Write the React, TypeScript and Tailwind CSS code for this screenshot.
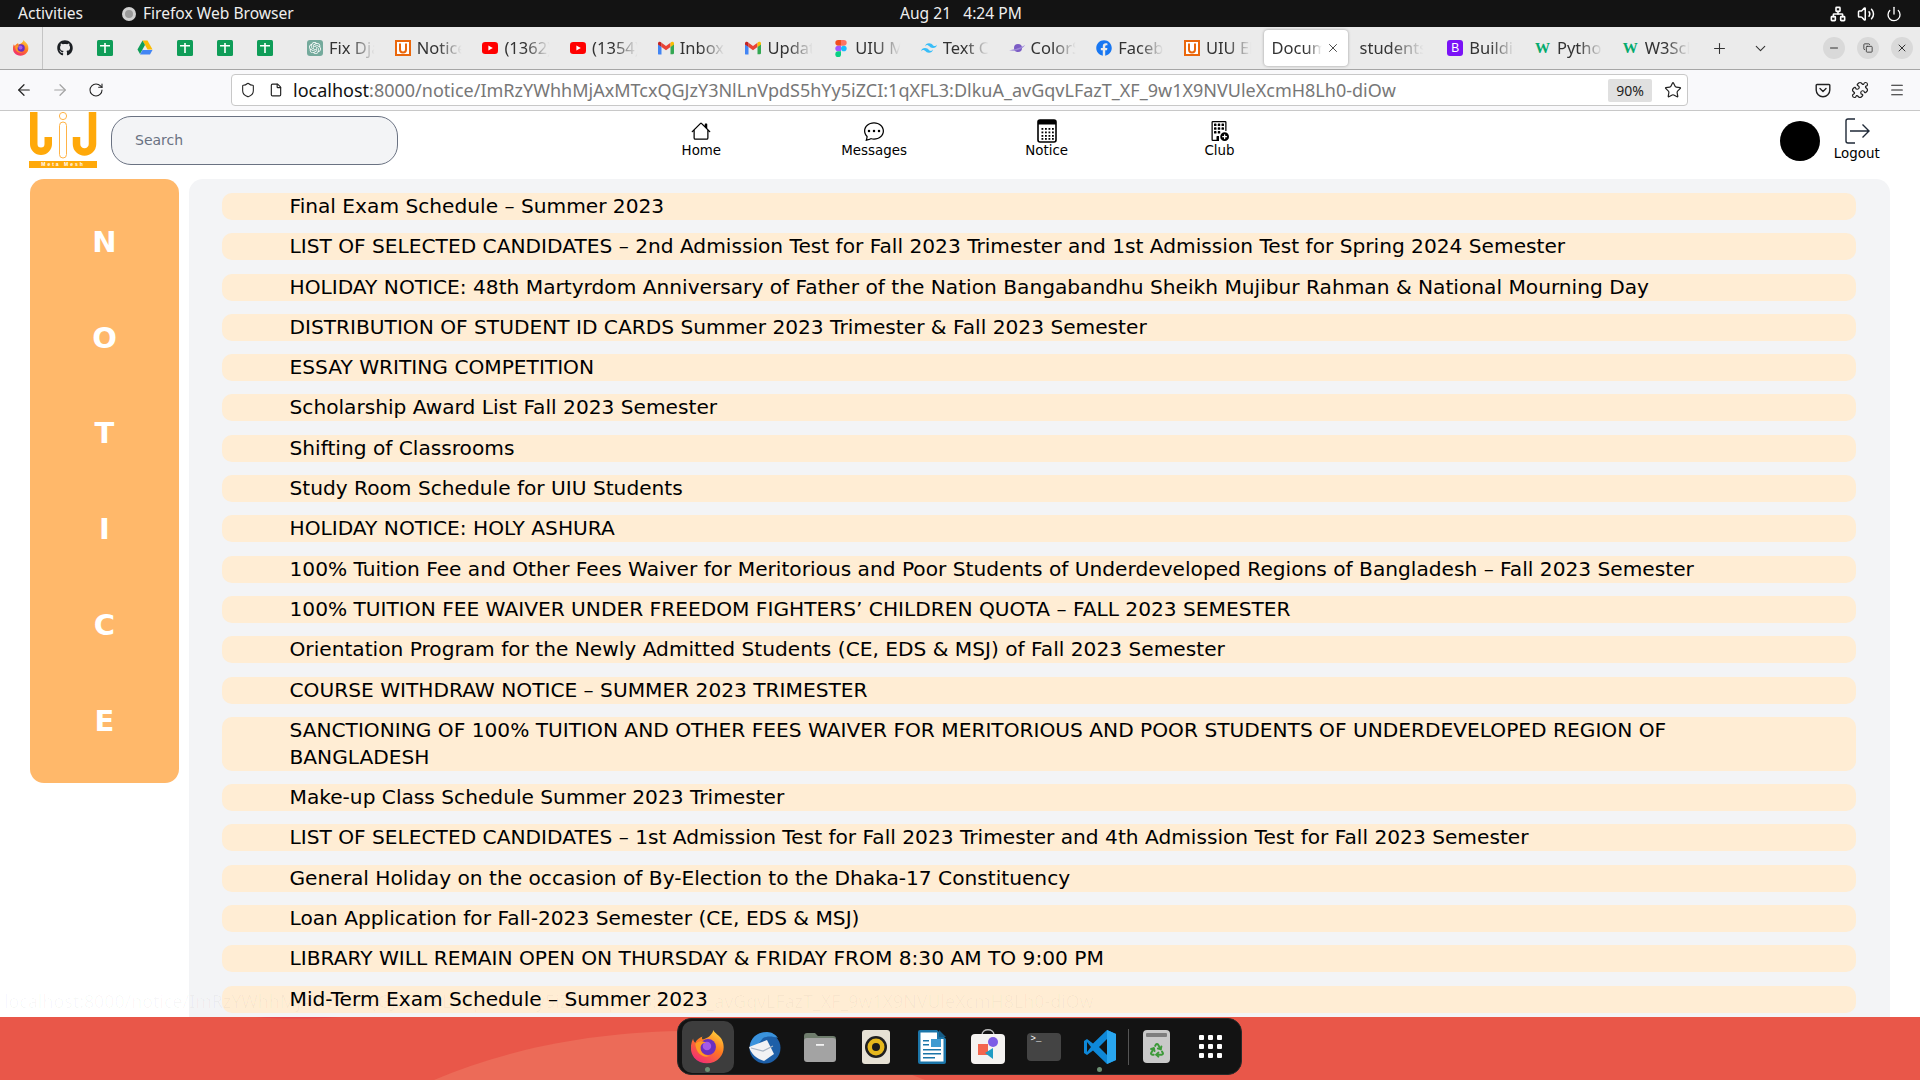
import React, { ReactNode } from "react";
import {
  ArrowLeft,
  ArrowRight,
  ChevronDown,
  Copy,
  File,
  Menu,
  Minus,
  Network,
  Plus,
  Power,
  Puzzle,
  Recycle,
  RotateCw,
  Shield,
  Star,
  Volume2,
  X,
} from "lucide-react";
import { FaFacebook, FaGithub } from "react-icons/fa";
import { SiOpenai, SiTailwindcss } from "react-icons/si";
import { BsBuildingAdd, BsChatDots, BsHouse } from "react-icons/bs";

const notices = [
  "Final Exam Schedule – Summer 2023",
  "LIST OF SELECTED CANDIDATES – 2nd Admission Test for Fall 2023 Trimester and 1st Admission Test for Spring 2024 Semester",
  "HOLIDAY NOTICE: 48th Martyrdom Anniversary of Father of the Nation Bangabandhu Sheikh Mujibur Rahman & National Mourning Day",
  "DISTRIBUTION OF STUDENT ID CARDS Summer 2023 Trimester & Fall 2023 Semester",
  "ESSAY WRITING COMPETITION",
  "Scholarship Award List Fall 2023 Semester",
  "Shifting of Classrooms",
  "Study Room Schedule for UIU Students",
  "HOLIDAY NOTICE: HOLY ASHURA",
  "100% Tuition Fee and Other Fees Waiver for Meritorious and Poor Students of Underdeveloped Regions of Bangladesh – Fall 2023 Semester",
  "100% TUITION FEE WAIVER UNDER FREEDOM FIGHTERS’ CHILDREN QUOTA – FALL 2023 SEMESTER",
  "Orientation Program for the Newly Admitted Students (CE, EDS & MSJ) of Fall 2023 Semester",
  "COURSE WITHDRAW NOTICE – SUMMER 2023 TRIMESTER",
  "SANCTIONING OF 100% TUITION AND OTHER FEES WAIVER FOR MERITORIOUS AND POOR STUDENTS OF UNDERDEVELOPED REGION OF BANGLADESH",
  "Make-up Class Schedule Summer 2023 Trimester",
  "LIST OF SELECTED CANDIDATES – 1st Admission Test for Fall 2023 Trimester and 4th Admission Test for Fall 2023 Semester",
  "General Holiday on the occasion of By-Election to the Dhaka-17 Constituency",
  "Loan Application for Fall-2023 Semester (CE, EDS & MSJ)",
  "LIBRARY WILL REMAIN OPEN ON THURSDAY & FRIDAY FROM 8:30 AM TO 9:00 PM",
  "Mid-Term Exam Schedule – Summer 2023",
];

const urlPath =
  ":8000/notice/ImRzYWhhMjAxMTcxQGJzY3NlLnVpdS5hYy5iZCI:1qXFL3:DlkuA_avGqvLFazT_XF_9w1X9NVUleXcmH8Lh0-diOw";

const Sheets = () => (
  <svg viewBox="0 0 16 16" className="w-4 h-4">
    <rect width="16" height="16" rx="1.5" fill="#0f9d58" />
    <path d="M3 5h10v1.6H3zM7.2 3h1.6v10H7.2z" fill="#fff" />
  </svg>
);

const Drive = () => (
  <svg viewBox="0 0 16 15" className="w-4 h-4">
    <path d="M5.5 0h5l5 9h-5z" fill="#fbbc04" />
    <path d="M5.5 0L0.5 9l2.5 4.5L8 4.5z" fill="#0f9d58" />
    <path d="M5.5 9.5h10L13 14H3z" fill="#4285f4" />
  </svg>
);

const Uiu = () => (
  <svg viewBox="0 0 16 16" className="w-4 h-4">
    <rect x="1" y="1" width="14" height="14" fill="#fff" stroke="#ea670c" strokeWidth="2" />
    <path d="M5 3.5v6a3 3 0 006 0v-6" fill="none" stroke="#ea670c" strokeWidth="2" />
  </svg>
);

const Youtube = () => (
  <svg viewBox="0 0 16 16" className="w-4 h-4">
    <rect y="2" width="16" height="12" rx="3.2" fill="#f00" />
    <path d="M6.4 5.4L10.8 8l-4.4 2.6z" fill="#fff" />
  </svg>
);

const Gmail = () => (
  <svg viewBox="0 0 16 13" className="w-4 h-4">
    <path d="M0 2v9.5A1.2 1.2 0 001.2 13H3.5V5.5z" fill="#4285f4" />
    <path d="M16 2v9.5a1.2 1.2 0 01-1.2 1.2H12.5V5.5z" fill="#34a853" />
    <path d="M3.5 5.5L8 8.8l4.5-3.3V1.2L8 4.5 3.5 1.2z" fill="#ea4335" />
    <path d="M0 2c0-1.6 2-2.3 3.5-.8v4.3L0 3z" fill="#c5221f" />
    <path d="M16 2c0-1.6-2-2.3-3.5-.8v4.3L16 3z" fill="#fbbc04" />
  </svg>
);

const Figma = () => (
  <svg viewBox="0 0 12 18" className="w-4 h-[17px]">
    <path d="M6 0H3a3 3 0 000 6h3z" fill="#f24e1e" />
    <path d="M6 0h3a3 3 0 010 6H6z" fill="#ff7262" />
    <path d="M6 6H3a3 3 0 000 6h3z" fill="#a259ff" />
    <circle cx="9" cy="9" r="3" fill="#1abcfe" />
    <path d="M6 12H3a3 3 0 103 3z" fill="#0acf83" />
  </svg>
);

const ColorSpace = () => (
  <svg viewBox="0 0 16 10" className="w-4 h-[10px]">
    <circle cx="9" cy="5" r="4" fill="#7b5cc4" />
    <path d="M0 7c4 0 11-2 16-5-2 4-10 7-16 5z" fill="#9b86d8" />
  </svg>
);

const BootstrapIcon = () => (
  <span className="flex w-4 h-4 rounded-[3px] bg-[#7a12f6] text-white text-[12px] leading-4 items-center justify-center font-['Liberation_Sans',sans-serif]">
    B
  </span>
);

const W3 = () => (
  <span className="w-4 text-[#04aa6d] text-[15px] leading-4 font-bold font-['Liberation_Serif',serif]">
    W
  </span>
);

const Gpt = () => (
  <span className="flex w-4 h-4 rounded-[3px] bg-[#74aa9c] items-center justify-center">
    <SiOpenai className="w-3 h-3 text-white" />
  </span>
);

const tabs: { icon?: ReactNode; label: string; active?: boolean }[] = [
  { icon: <Gpt />, label: "Fix Django" },
  { icon: <Uiu />, label: "Notice" },
  { icon: <Youtube />, label: "(1362) YouTube" },
  { icon: <Youtube />, label: "(1354) YouTube" },
  { icon: <Gmail />, label: "Inbox (3)" },
  { icon: <Gmail />, label: "Update" },
  { icon: <Figma />, label: "UIU Meta" },
  { icon: <SiTailwindcss className="w-4 h-4 text-[#38bdf8]" />, label: "Text Color" },
  { icon: <ColorSpace />, label: "ColorSpace" },
  { icon: <FaFacebook className="w-4 h-4 text-[#1877f2]" />, label: "Facebook" },
  { icon: <Uiu />, label: "UIU ELMS" },
  { label: "Document", active: true },
  { label: "students" },
  { icon: <BootstrapIcon />, label: "Building" },
  { icon: <W3 />, label: "Python" },
  { icon: <W3 />, label: "W3Schools" },
];

const TopBar = () => (
  <div className="h-[27px] bg-[#131313] flex items-center text-[#eeeeee] text-[15.6px] relative shrink-0">
    <span className="ml-[18px]">Activities</span>
    <span className="ml-[39px] w-[14px] h-[14px] rounded-full bg-[#9a9a9a] border-[3px] border-[#d0d0d0]" />
    <span className="ml-[7px]">Firefox Web Browser</span>
    <span className="absolute left-[900px]">Aug 21&nbsp;&nbsp; 4:24 PM</span>
    <div className="ml-auto flex items-center gap-[11px] pr-[18px]">
      <Network className="w-4 h-4 text-white" strokeWidth={2.4} />
      <Volume2 className="w-[18px] h-[18px] text-white" />
      <Power className="w-4 h-4 text-white" />
    </div>
  </div>
);

const TabStrip = () => (
  <div className="h-[43px] bg-[#ebebeb] border-b border-[#a6a6a6] flex items-center text-[#333333] text-[16.5px] shrink-0">
    <div className="w-[43px] h-full flex items-center justify-center border-r border-[#c4c4c4]">
      <Firefox size={16} />
    </div>
    <div className="flex items-center gap-[24px] pl-[14px] w-[254px]">
      <FaGithub className="w-4 h-4 text-[#1b1f23]" />
      <Sheets />
      <Drive />
      <Sheets />
      <Sheets />
      <Sheets />
    </div>
    {tabs.map((t) =>
      t.active ? (
        <div
          key={t.label}
          className="w-[84px] h-[36px] mx-[2px] px-2 flex items-center justify-between bg-white rounded-[4px] shadow-[0_0_3px_rgba(0,0,0,0.35)] shrink-0"
        >
          <span className="w-[50px] overflow-hidden whitespace-nowrap [mask-image:linear-gradient(to_right,black_70%,transparent)]">
            {t.label}
          </span>
          <X className="w-[14px] h-[14px]" strokeWidth={1.5} />
        </div>
      ) : (
        <div key={t.label} className="w-[87.7px] pl-[10px] pr-[8px] flex items-center gap-[6px] shrink-0">
          {t.icon && <span className="w-4 h-4 flex items-center justify-center shrink-0">{t.icon}</span>}
          <span className="overflow-hidden whitespace-nowrap [mask-image:linear-gradient(to_right,black_45%,transparent_95%)]">
            {t.label}
          </span>
        </div>
      )
    )}
    <Plus className="w-[17px] h-[17px] ml-[11px]" strokeWidth={1.5} />
    <ChevronDown className="w-[17px] h-[17px] ml-[24px]" strokeWidth={1.5} />
    <div className="ml-auto flex gap-3 pr-[7px]">
      <span className="w-[22px] h-[22px] rounded-full bg-[#d9d9d9] flex items-center justify-center">
        <Minus className="w-3 h-3" />
      </span>
      <span className="w-[22px] h-[22px] rounded-full bg-[#d9d9d9] flex items-center justify-center">
        <Copy className="w-[10px] h-[10px]" />
      </span>
      <span className="w-[22px] h-[22px] rounded-full bg-[#d9d9d9] flex items-center justify-center">
        <X className="w-3 h-3" />
      </span>
    </div>
  </div>
);

const Pocket = () => (
  <svg viewBox="0 0 16 16" className="w-4 h-4" fill="none" stroke="currentColor" strokeWidth="1.4">
    <path d="M2 2.5h12a.8.8 0 01.8.8V8a6.8 6.8 0 01-13.6 0V3.3a.8.8 0 01.8-.8z" />
    <path d="M5 6.5l3 3 3-3" strokeLinecap="round" strokeLinejoin="round" />
  </svg>
);

const UrlBar = () => (
  <div className="h-[41px] bg-[#f9f9fb] border-b border-[#c8c8c8] flex items-center shrink-0 text-[#222222]">
    <ArrowLeft className="w-[18px] h-[18px] ml-[15px]" strokeWidth={1.6} />
    <ArrowRight className="w-[18px] h-[18px] ml-[18px] text-[#a3a3a3]" strokeWidth={1.6} />
    <RotateCw className="w-4 h-4 ml-[19px]" strokeWidth={1.6} />
    <div className="ml-[127px] w-[1457px] h-[32px] bg-white border border-[#c8c8c8] rounded-[4px] flex items-center shrink-0">
      <Shield className="w-4 h-4 ml-2" strokeWidth={1.6} />
      <File className="w-[14px] h-[14px] ml-[13px]" strokeWidth={2} />
      <span className="ml-[10px] text-[18px] whitespace-nowrap text-[#777777] w-[1310px] overflow-hidden">
        <span className="text-[#111111]">localhost</span>
        {urlPath}
      </span>
      <span className="ml-[5px] w-[44px] h-[23px] bg-[#e0e0e0] rounded-[2px] text-[14px] flex items-center justify-center shrink-0">
        90%
      </span>
      <Star className="ml-[12px] w-[18px] h-[18px] shrink-0" strokeWidth={1.6} />
    </div>
    <div className="ml-auto flex items-center gap-[20px] pr-[15px]">
      <Pocket />
      <Puzzle className="w-[18px] h-[18px]" strokeWidth={1.6} />
      <Menu className="w-4 h-4" strokeWidth={1.6} />
    </div>
  </div>
);

// the logo on the left of the page header
const MetaMeshLogo = () => (
  <div className="w-[68px] h-[56px] flex flex-col justify-between">
    <svg viewBox="0 0 68 47" className="w-[68px] h-[47px]">
      <path d="M4.75 0v32a7.25 7.25 0 0014.5 0v-7" fill="none" stroke="#ffa90a" strokeWidth="7.5" />
      <path d="M63.5 0v32a8 8 0 01-16 0v-7" fill="none" stroke="#ffa90a" strokeWidth="7.5" />
      <circle cx="34" cy="4" r="3.6" fill="none" stroke="#ffb347" strokeWidth="1" />
      <rect x="30.5" y="10" width="7" height="36" rx="3.5" fill="none" stroke="#ffb347" strokeWidth="1" />
    </svg>
    <div className="h-[7px] bg-[#ffa90a] text-white text-[5px] leading-[7px] tracking-[2px] text-center font-['Liberation_Sans',sans-serif] font-bold whitespace-nowrap overflow-hidden">
      Meta Mesh
    </div>
  </div>
);

const NoticeIcon = () => (
  <svg viewBox="0 0 20 24" className="w-5 h-6">
    <rect x="1" y="1" width="18" height="22" rx="2" fill="none" stroke="#000" strokeWidth="1.6" />
    <rect x="1" y="1" width="18" height="4.5" fill="#000" />
    {[9, 12.5, 16, 19].map((y) =>
      [4.5, 8, 11.5, 15].map((x) => <rect key={`${x}-${y}`} x={x} y={y} width="1.8" height="1.8" fill="#000" />)
    )}
  </svg>
);

const LogoutIcon = () => (
  <svg viewBox="0 0 26 26" className="w-[26px] h-[26px]" fill="none" stroke="#1f2937" strokeWidth="1.4">
    <path d="M11 1H4a2 2 0 00-2 2v20a2 2 0 002 2h7" />
    <path d="M6 13h19M18.5 6.5L25 13l-6.5 6.5" />
  </svg>
);

const navItems = [
  { label: "Home", icon: <BsHouse className="w-5 h-5" /> },
  { label: "Messages", icon: <BsChatDots className="w-5 h-5" /> },
  { label: "Notice", icon: <NoticeIcon /> },
  { label: "Club", icon: <BsBuildingAdd className="w-5 h-6" /> },
];

const PageHeader = () => (
  <div className="h-[68px] flex shrink-0 items-start font-['DejaVu_Sans',sans-serif]">
    <div className="ml-[29px] mt-px">
      <MetaMeshLogo />
    </div>
    <div className="ml-[14px] mt-[5px] w-[287px] h-[49px] bg-gray-100 border border-gray-500 rounded-[20px] flex items-center pl-[23px] text-[14px] text-gray-500 shrink-0">
      Search
    </div>
    <div className="flex ml-[217px] mt-[7px] text-[13.4px] text-black shrink-0">
      {navItems.map((n) => (
        <div key={n.label} className="w-[172.7px] h-[41px] flex flex-col items-center justify-between">
          <span className="h-[26px] flex items-center">{n.icon}</span>
          <span className="leading-4">{n.label}</span>
        </div>
      ))}
    </div>
    <div className="ml-[474px] mt-[10px] w-10 h-10 rounded-full bg-black shrink-0" />
    <div className="ml-[12px] mt-[7px] w-[50px] flex flex-col items-center text-[13.4px] text-black shrink-0">
      <LogoutIcon />
      <span className="leading-4 mt-[2px]">Logout</span>
    </div>
  </div>
);

const Sidebar = () => (
  <div className="w-[149px] bg-orange-300 rounded-[14px] pt-[16px] pb-[14px] flex flex-col self-start text-white text-[29px] font-bold shrink-0">
    {["N", "O", "T", "I", "C", "E"].map((l) => (
      <div key={l} className="h-[95.7px] flex items-center justify-center">
        {l}
      </div>
    ))}
  </div>
);

const NoticePanel = () => (
  <div className="ml-[10px] w-[1701px] bg-gray-100 rounded-t-[14px] pt-[14px] pl-[33px] pr-[34px] flex flex-col gap-[13.3px] overflow-hidden">
    {notices.map((n) => (
      <div key={n} className="bg-orange-100 rounded-[10px] pl-[67.5px] pr-[68px] text-[20.17px] leading-[27px] text-black shrink-0">
        {n}
      </div>
    ))}
  </div>
);

// small app icons for the dock
const Firefox = ({ size }: { size: number }) => (
  <svg viewBox="0 0 32 32" width={size} height={size}>
    <defs>
      <linearGradient id="ffx" x1="0.8" y1="0" x2="0.2" y2="1">
        <stop offset="0" stopColor="#ffd53d" />
        <stop offset="0.45" stopColor="#ff7a1f" />
        <stop offset="1" stopColor="#f0267c" />
      </linearGradient>
    </defs>
    <path d="M21 0c1 3 6 5 8 9 3 6 2 13-2 17-6 7-18 7-24 0C-1 21-1 14 2 8c0 2 1 3 2 4 1-3 4-5 7-6-1 1-1 2 0 3 4-1 9-4 10-9z" fill="url(#ffx)" />
    <circle cx="16" cy="16" r="7.5" fill="#6a2fc0" />
    <circle cx="15" cy="15" r="4" fill="#a55ae8" />
    <path d="M4 13c3-3 7-3 10-1-3 0-5 2-5 5 0 5 5 8 10 7-6 3-14 0-15-11z" fill="#ff9a24" />
  </svg>
);

const Thunderbird = () => (
  <svg viewBox="0 0 34 34" className="w-[34px] h-[34px]">
    <circle cx="18" cy="18" r="15.5" fill="#1d5fa8" />
    <path d="M3 16C4 7 11 2 20 2c5 0 9 3 11 6-6-2-11-2-15 0L5 22z" fill="#3a93dd" />
    <path d="M2 17l18-7 7 14-10 7C10 29 4 24 2 17z" fill="#f2f2f4" />
    <path d="M4 18l12 3 10-5" fill="none" stroke="#a9b5c4" strokeWidth="1.2" />
  </svg>
);

const Files = () => (
  <svg viewBox="0 0 34 32" className="w-[34px] h-8">
    <path d="M1 5a3 3 0 013-3h8l3 3h15a3 3 0 013 3v4H1z" fill="#6f7d6d" />
    <rect x="1" y="7" width="32" height="24" rx="3" fill="#a3a3a3" />
    <rect x="13" y="13" width="8" height="1.8" fill="#f2f2f2" />
  </svg>
);

const Rhythmbox = () => (
  <svg viewBox="0 0 28 34" className="w-[28px] h-[34px]">
    <rect width="28" height="34" rx="3" fill="#e6e1d4" />
    <circle cx="14" cy="17" r="11" fill="#1f1f1f" />
    <circle cx="14" cy="17" r="8.5" fill="#e6b81c" />
    <circle cx="14" cy="17" r="4" fill="#1c1c1c" />
  </svg>
);

const Writer = () => (
  <svg viewBox="0 0 28 34" className="w-[28px] h-[34px]">
    <path d="M2 0h17l9 9v23a2 2 0 01-2 2H2a2 2 0 01-2-2V2a2 2 0 012-2z" fill="#1b75a8" />
    <path d="M2.5 2.5H19v6.5h6.5v22.5h-23z" fill="#fff" />
    <path d="M21 0l7 7h-7z" fill="#175c85" />
    <rect x="13" y="9" width="10" height="8" fill="#3f9bd1" />
    <path d="M5 10h6v1.6H5zM5 14h6v1.6H5zM5 19h18v1.6H5zM5 23h18v1.6H5zM5 27h12v1.6H5z" fill="#1b75a8" />
  </svg>
);

const Store = () => (
  <svg viewBox="0 0 34 36" className="w-[34px] h-9">
    <path d="M11 6c0-7 12-7 12 0" fill="none" stroke="#bdbdbd" strokeWidth="1.4" />
    <rect y="5" width="34" height="30" rx="4" fill="#f5f3f1" />
    <circle cx="22" cy="13" r="5" fill="#7c5ce6" />
    <rect x="7" y="15" width="10" height="11" fill="#f4664e" />
    <path d="M14 24l8-5v11z" fill="#1f9cc4" />
  </svg>
);

const Terminal = () => (
  <div className="w-[34px] h-[28px] bg-[#444444] rounded-[4px] pl-[4px] text-white text-[9px] leading-[12px] font-['Liberation_Mono',monospace]">
    &gt;_
  </div>
);

const VsCode = () => (
  <svg viewBox="0 0 32 34" className="w-8 h-[34px]">
    <path d="M23 0l9 4v26l-9 4-14-13.5L3 25l-3-2v-12l3-2 6 4.5z" fill="#0e88d8" />
    <path d="M23 0l9 4v26l-9 4z" fill="#29a6ef" />
    <path d="M23 9l-8 8 8 8z" fill="#131313" />
    <path d="M3 12l4 5-4 5z" fill="#131313" />
  </svg>
);

const Trash = () => (
  <div className="w-[27px] h-[33px] rounded-[4px] bg-[#c9c9c9] pt-[3px] px-[3px] flex flex-col items-center">
    <span className="w-full h-[4px] rounded-[1px] bg-[#7e7e7e]" />
    <Recycle className="w-4 h-4 mt-[5px] text-[#3d9a39]" strokeWidth={3} />
  </div>
);

const AppGrid = () => (
  <div className="grid grid-cols-3 gap-[4px]">
    {[0, 1, 2, 3, 4, 5, 6, 7, 8].map((i) => (
      <span key={i} className="w-[5px] h-[5px] rounded-[1px] bg-white" />
    ))}
  </div>
);

const DockSlot = ({ children, dot }: { children: ReactNode; dot?: boolean }) => (
  <div className="w-[56px] h-full flex items-center justify-center relative">
    {children}
    {dot && <span className="absolute bottom-[2px] w-[5px] h-[5px] rounded-full bg-[#6d8f73]" />}
  </div>
);

const Dock = () => (
  <div className="h-[63px] bg-[#e95749] flex justify-center pt-[1px] shrink-0 relative overflow-hidden">
    <svg viewBox="0 0 1920 63" className="absolute inset-0 w-full h-full">
      <path d="M434 63C500 35 580 16 680 14L800 14 925 63z" fill="#ec6b58" />
      <path d="M256 0h84c-30 2-60 2-84 0z" fill="#e5484a" />
    </svg>
    <div className="relative mr-[2px] w-[565px] h-[57px] bg-[#131313] border border-[#2a2a2a] rounded-[14px] flex items-center pl-[2px]">
      <div className="w-[52px] h-[52px] ml-[2px] mr-[2px] rounded-[10px] bg-[#3d3d3d] flex items-center justify-center relative">
        <Firefox size={34} />
        <span className="absolute bottom-[1px] w-[5px] h-[5px] rounded-full bg-[#6d8f73]" />
      </div>
      <DockSlot><Thunderbird /></DockSlot>
      <DockSlot><Files /></DockSlot>
      <DockSlot><Rhythmbox /></DockSlot>
      <DockSlot><Writer /></DockSlot>
      <DockSlot><Store /></DockSlot>
      <DockSlot><Terminal /></DockSlot>
      <DockSlot dot><VsCode /></DockSlot>
      <span className="w-px h-[36px] bg-[#555555]" />
      <DockSlot><Trash /></DockSlot>
      <div className="w-[52px] h-full flex items-center justify-center"><AppGrid /></div>
    </div>
  </div>
);

export default function App() {
  return (
    <div className="h-screen w-full overflow-hidden flex flex-col bg-white font-['Noto_Sans',sans-serif]">
      <TopBar />
      <TabStrip />
      <UrlBar />
      <PageHeader />
      <div className="flex-1 min-h-0 flex pl-[30px] font-['DejaVu_Sans',sans-serif] relative">
        <Sidebar />
        <NoticePanel />
        {/* link preview fading out over the page */}
        <span className="absolute left-[4px] bottom-[2px] text-[17.8px] text-black/[0.03] whitespace-nowrap font-['Noto_Sans',sans-serif]">
          localhost{urlPath}
        </span>
      </div>
      <Dock />
    </div>
  );
}
